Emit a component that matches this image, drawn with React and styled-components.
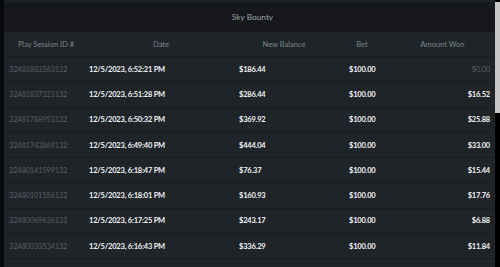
import React from 'react';
import styled, { createGlobalStyle } from 'styled-components';

const GlobalStyle = createGlobalStyle`
  html, body {
    margin: 0;
    padding: 0;
    background: #000;
    overflow: hidden;
  }
  body {
    font-family: Lato, "Noto Sans", sans-serif;
  }
`;

const Frame = styled.div`
  display: flex;
  width: 500px;
  height: 267px;
  background: #000;
`;

const LeftEdge = styled.div`
  width: 4px;
  background: #08090a;
`;

const Panel = styled.div`
  flex: 1;
  display: flex;
  flex-direction: column;
  border-top: 2px solid #1b2229;
  background: #1f2428;
  overflow: hidden;
`;

const Title = styled.div`
  height: 30px;
  flex: none;
  display: flex;
  align-items: center;
  justify-content: center;
  background: #16181b;
  color: #9ba1a7;
  font-size: 8.3px;
  padding-left: 6px;
`;

const Row = styled.div`
  display: grid;
  grid-template-columns: ${p => p.$cols};
  align-items: center;
  height: ${p => p.$h}px;
  flex: none;
  box-sizing: border-box;
  border-bottom: 1px solid #191d21;
`;

const HeadCell = styled.div`
  text-align: center;
  color: #7d848b;
  font-size: 7.5px;
`;

const Cell = styled.div`
  padding: 0 5px;
  font-size: 7.5px;
  white-space: nowrap;
  text-align: ${p => (p.$right ? 'right' : 'left')};
  color: ${p => (p.$muted ? '#575e65' : '#f0f2f5')};
  font-weight: ${p => (p.$muted ? 400 : 700)};
  letter-spacing: -0.2px;
`;

const Scrollbar = styled.div`
  width: 5px;
  background: #000;
  padding-top: 2px;
`;

const Thumb = styled.div`
  height: 111px;
  background: #c6c6c6;
`;

const headCols = '84px 146px 100px 56px 1fr';
const dataCols = '80px 150px 110px 36px 1fr';

const rows = [
  ['32481883563132', '12/5/2023, 6:52:21 PM', '$186.44', '$100.00', '$0.00'],
  ['32481837323132', '12/5/2023, 6:51:28 PM', '$286.44', '$100.00', '$16.52'],
  ['32481788953132', '12/5/2023, 6:50:32 PM', '$369.92', '$100.00', '$25.88'],
  ['32481743869132', '12/5/2023, 6:49:40 PM', '$444.04', '$100.00', '$33.00'],
  ['32480141599132', '12/5/2023, 6:18:47 PM', '$76.37', '$100.00', '$15.44'],
  ['32480101556132', '12/5/2023, 6:18:01 PM', '$160.93', '$100.00', '$17.76'],
  ['32480069636132', '12/5/2023, 6:17:25 PM', '$243.17', '$100.00', '$6.88'],
  ['32480033534132', '12/5/2023, 6:16:43 PM', '$336.29', '$100.00', '$11.84'],
];

export default function App() {
  return (
    <>
      <GlobalStyle />
      <Frame>
        <LeftEdge />
        <Panel>
          <Title>Sky Bounty</Title>
          <Row $cols={headCols} $h={25}>
            <HeadCell>Play Session ID #</HeadCell>
            <HeadCell>Date</HeadCell>
            <HeadCell>New Balance</HeadCell>
            <HeadCell>Bet</HeadCell>
            <HeadCell>Amount Won</HeadCell>
          </Row>
          {rows.map(r => (
            <Row key={r[0]} $cols={dataCols} $h={25.3}>
              <Cell $muted>{r[0]}</Cell>
              <Cell>{r[1]}</Cell>
              <Cell>{r[2]}</Cell>
              <Cell>{r[3]}</Cell>
              <Cell $right $muted={r[4] === '$0.00'}>{r[4]}</Cell>
            </Row>
          ))}
          <Row $cols={dataCols} $h={25.3} />
        </Panel>
        <Scrollbar>
          <Thumb />
        </Scrollbar>
      </Frame>
    </>
  );
}
